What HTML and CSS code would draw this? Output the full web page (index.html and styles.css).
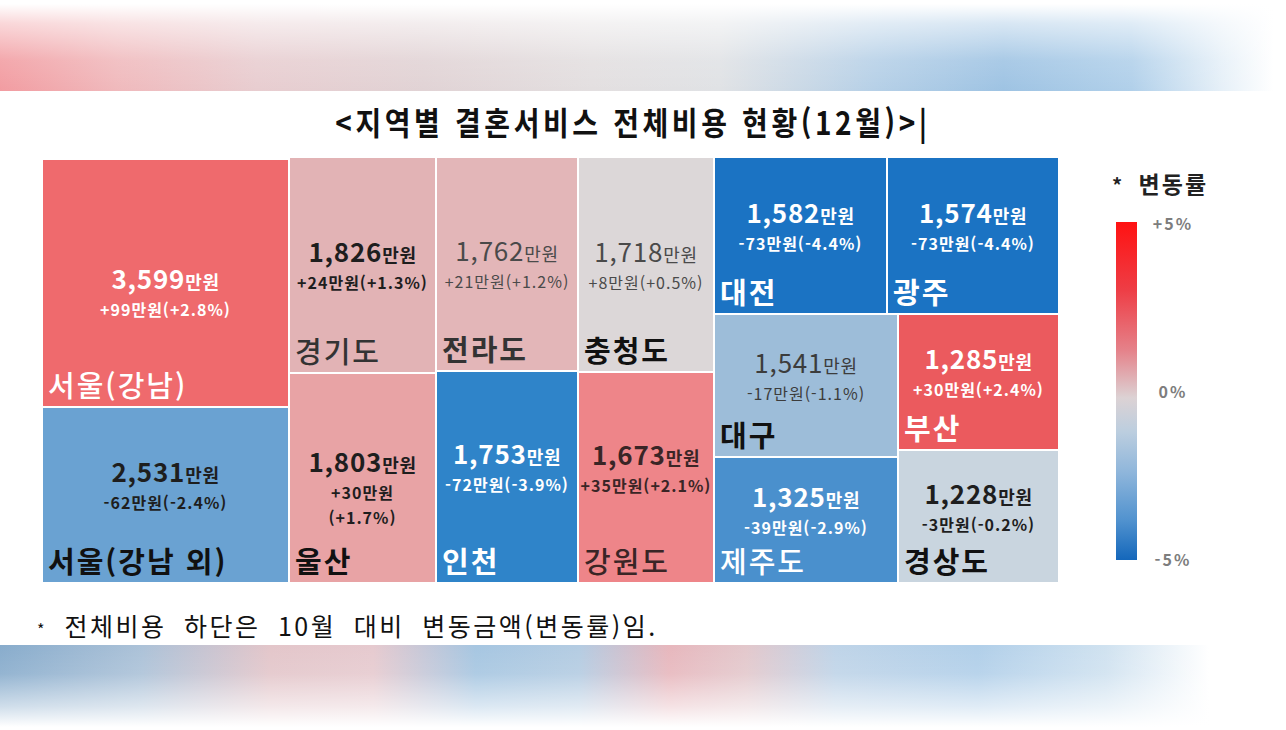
FILE: index.html
```html
<!DOCTYPE html>
<html lang="ko">
<head>
<meta charset="utf-8">
<title>지역별 결혼서비스 전체비용 현황(12월)</title>
<link rel="stylesheet" href="styles.css">
</head>
<body>
<div class="page">
  <div class="band band-top"></div>
  <h1 class="title"><span class="title-text">&lt;지역별 결혼서비스 전체비용 현황(12월)&gt;|</span></h1>

  <div class="main">
    <div class="treemap">
      <div class="col col-1">
        <div class="cell seoul-gn">
          <div class="val down v-white bold"><div class="num">3,599<small>만원</small></div><div class="chg">+99만원(+2.8%)</div></div>
          <div class="name n-white medium">서울(강남)</div>
        </div>
        <div class="cell seoul-etc">
          <div class="val up v-dark bold"><div class="num">2,531<small>만원</small></div><div class="chg">-62만원(-2.4%)</div></div>
          <div class="name n-black">서울(강남 외)</div>
        </div>
      </div>

      <div class="col col-2">
        <div class="cell gyeonggi">
          <div class="val mid v-dark bold"><div class="num">1,826<small>만원</small></div><div class="chg">+24만원(+1.3%)</div></div>
          <div class="name n-grey medium">경기도</div>
        </div>
        <div class="cell ulsan">
          <div class="val down v-dark bold"><div class="num">1,803<small>만원</small></div><div class="chg">+30만원</div><div class="chg">(+1.7%)</div></div>
          <div class="name n-black">울산</div>
        </div>
      </div>

      <div class="col col-3">
        <div class="cell jeolla">
          <div class="val mid v-grey"><div class="num">1,762<small>만원</small></div><div class="chg">+21만원(+1.2%)</div></div>
          <div class="name n-grey">전라도</div>
        </div>
        <div class="cell incheon">
          <div class="val up v-white bold"><div class="num">1,753<small>만원</small></div><div class="chg">-72만원(-3.9%)</div></div>
          <div class="name n-white">인천</div>
        </div>
      </div>

      <div class="col col-4">
        <div class="cell chungcheong">
          <div class="val mid v-grey"><div class="num">1,718<small>만원</small></div><div class="chg">+8만원(+0.5%)</div></div>
          <div class="name n-black">충청도</div>
        </div>
        <div class="cell gangwon">
          <div class="val up v-brown bold"><div class="num">1,673<small>만원</small></div><div class="chg">+35만원(+2.1%)</div></div>
          <div class="name n-brown medium">강원도</div>
        </div>
      </div>

      <div class="col col-5">
        <div class="row-top">
          <div class="cell daejeon">
            <div class="val up v-white bold"><div class="num">1,582<small>만원</small></div><div class="chg">-73만원(-4.4%)</div></div>
            <div class="name n-white">대전</div>
          </div>
          <div class="cell gwangju">
            <div class="val up v-white bold"><div class="num">1,574<small>만원</small></div><div class="chg">-73만원(-4.4%)</div></div>
            <div class="name n-white">광주</div>
          </div>
        </div>
        <div class="row-bottom">
          <div class="sub sub-left">
            <div class="cell daegu">
              <div class="val up v-mid"><div class="num">1,541<small>만원</small></div><div class="chg">-17만원(-1.1%)</div></div>
              <div class="name n-black">대구</div>
            </div>
            <div class="cell jeju">
              <div class="val up v-white bold"><div class="num">1,325<small>만원</small></div><div class="chg">-39만원(-2.9%)</div></div>
              <div class="name n-white medium">제주도</div>
            </div>
          </div>
          <div class="sub sub-right">
            <div class="cell busan">
              <div class="val up v-white bold"><div class="num">1,285<small>만원</small></div><div class="chg">+30만원(+2.4%)</div></div>
              <div class="name n-white">부산</div>
            </div>
            <div class="cell gyeongsang">
              <div class="val up v-dark bold"><div class="num">1,228<small>만원</small></div><div class="chg">-3만원(-0.2%)</div></div>
              <div class="name n-black">경상도</div>
            </div>
          </div>
        </div>
      </div>
    </div>

    <div class="legend">
      <div class="legend-title"><span class="star">*</span> 변동률</div>
      <div class="legend-body">
        <div class="legend-bar"></div>
        <div class="legend-labels">
          <span>+5%</span>
          <span>0%</span>
          <span>-5%</span>
        </div>
      </div>
    </div>
  </div>

  <p class="footnote"><span class="fn-star">*</span> 전체비용 하단은 10월 대비 변동금액(변동률)임.</p>

  <div class="band band-bottom"></div>
</div>
</body>
</html>
```

FILE: styles.css
```css
* {
  box-sizing: border-box;
}

html, body {
  margin: 0;
  padding: 0;
  background: #ffffff;
}

body {
  font-family: "Noto Sans CJK KR", "Noto Sans", sans-serif;
  color: #111;
}

.page {
  width: 1286px;
  height: 730px;
  overflow: hidden;
}

/* blurred decorative bands */
.band {
  width: 100%;
}

.band-top {
  height: 87px;
  margin-top: 4px;
  background:
    linear-gradient(to bottom, #ffffff 0%, rgba(255,255,255,0.6) 22%, rgba(255,255,255,0.12) 65%, rgba(255,255,255,0) 100%),
    linear-gradient(to right, #f29ca1 0%, #f0b9bc 9%, #e8cdd0 20%, #e1d3d5 33%, #e3dfe0 46%, #e0e2e5 56%, #b6d0e7 68%, #9ec3e3 78%, #b1d0ea 88%, #e6f0f8 95%, #ffffff 99%);
}

.band-bottom {
  height: 82px;
  margin-top: 5px;
  background:
    linear-gradient(to top, #ffffff 0%, rgba(255,255,255,0.6) 25%, rgba(255,255,255,0.1) 65%, rgba(255,255,255,0) 100%),
    linear-gradient(to right, #88accc 0%, #acc2d8 11%, #e3c6ca 21%, #e6cacf 29%, #a6c6e1 37%, #b4cce2 45%, #e7b7bd 52%, #e3c8cc 58%, #bfd4e8 65%, #b1cfe9 76%, #d0e2f0 86%, #ffffff 94%);
}

/* title */
.title {
  margin: 0;
  height: 60px;
  line-height: 60px;
  text-align: center;
  padding-right: 20px;
  font-size: 28px;
  font-weight: 700;
  letter-spacing: 3.6px;
  color: #111;
}

.title-text {
  display: inline-block;
  transform: scaleY(1.14);
}

/* main area */
.main {
  display: flex;
  margin-top: 7px;
  padding-left: 43px;
}

.treemap {
  display: flex;
  gap: 2px;
  width: 1015px;
  height: 424px;
  background: #ffffff;
}

.col {
  display: flex;
  flex-direction: column;
  gap: 2px;
}

.col-1 { width: 245px; padding-top: 2px; }
.col-2 { width: 145px; }
.col-3 { width: 140px; }
.col-4 { width: 134px; }
.col-5 { width: 343px; }

.row-top {
  height: 155px;
  display: flex;
  gap: 2px;
}

.row-bottom {
  flex: 1;
  display: flex;
  gap: 2px;
}

.sub {
  display: flex;
  flex-direction: column;
  gap: 2px;
}

.sub-left { width: 182px; }
.sub-right { flex: 1; }

/* cells */
.cell {
  display: grid;
  grid-template: 1fr / 1fr;
  min-height: 0;
  overflow: hidden;
}

.cell > * {
  grid-area: 1 / 1;
}

.seoul-gn   { height: 246px; background: #ef6a6d; }
.seoul-etc  { flex: 1; background: #6aa2d2; }
.gyeonggi   { height: 214px; background: #e2b3b5; }
.ulsan      { flex: 1; background: #e8a3a5; }
.jeolla     { height: 212px; background: #e3b6b8; }
.incheon    { flex: 1; background: #2f84c9; }
.chungcheong{ height: 213px; background: #dcd7d8; }
.gangwon    { flex: 1; background: #ee8589; }
.daejeon    { width: 171px; background: #1b73c3; }
.gwangju    { flex: 1; background: #1b73c3; }
.daegu      { height: 141px; background: #9dbdd9; }
.jeju       { flex: 1; background: #4a90cd; }
.busan      { height: 134px; background: #eb5a5e; }
.gyeongsang { flex: 1; background: #c9d5df; }

/* value block */
.val {
  align-self: center;
  justify-self: center;
  text-align: center;
  white-space: nowrap;
  font-weight: 400;
}

.val.up   { margin-bottom: 20px; }
.val.mid  { margin: 0; }
.val.down { margin-top: 18px; }

.num {
  font-size: 26px;
  line-height: 31px;
  letter-spacing: 0.8px;
}

.num small {
  font-size: 18px;
  letter-spacing: 0.6px;
}

.chg {
  font-size: 16px;
  line-height: 25px;
  letter-spacing: 1px;
}

.val.bold .num,
.val.bold .chg {
  font-weight: 700;
}

.v-white { color: #ffffff; }
.v-dark  { color: #1e1e1e; }
.v-grey  { color: #4a4a4a; }
.v-mid   { color: #3c3c3c; }
.v-brown { color: #3a2526; }

/* region name */
.name {
  align-self: end;
  justify-self: start;
  padding: 0 5px 5px;
  font-size: 29px;
  line-height: 34px;
  letter-spacing: 2px;
  font-weight: 700;
  white-space: nowrap;
}

.name.medium { font-weight: 500; }

.n-white { color: #ffffff; }
.n-black { color: #111111; }
.n-grey  { color: #333333; }
.n-brown { color: #3a2526; }

/* legend */
.legend {
  margin-left: 54px;
  padding-top: 10px;
  display: flex;
  flex-direction: column;
}

.legend-title {
  font-size: 23px;
  line-height: 30px;
  font-weight: 700;
  color: #222;
  letter-spacing: 2px;
}

.legend-title .star {
  font-size: 20px;
  margin-right: 6px;
}

.legend-body {
  display: flex;
  margin-top: 22px;
  margin-left: 4px;
}

.legend-bar {
  width: 21px;
  height: 338px;
  background: linear-gradient(to bottom, #ff1212 0%, #ee3d45 20%, #e5828a 38%, #dcd2d4 52%, #bccedf 62%, #8fb6db 74%, #5293cf 88%, #1467bb 100%);
}

.legend-labels {
  width: 60px;
  height: 354px;
  margin-top: -8px;
  margin-left: 6px;
  display: flex;
  flex-direction: column;
  justify-content: space-between;
  align-items: center;
  font-size: 16px;
  line-height: 18px;
  font-weight: 700;
  letter-spacing: 2px;
  color: #7d7d7d;
}

/* footnote */
.footnote {
  margin: 28px 0 0;
  padding-left: 37px;
  height: 30px;
  font-size: 25px;
  line-height: 30px;
  letter-spacing: 2.5px;
  word-spacing: 8px;
  color: #111;
  font-weight: 400;
}

.fn-star {
  font-size: 16px;
}
```
